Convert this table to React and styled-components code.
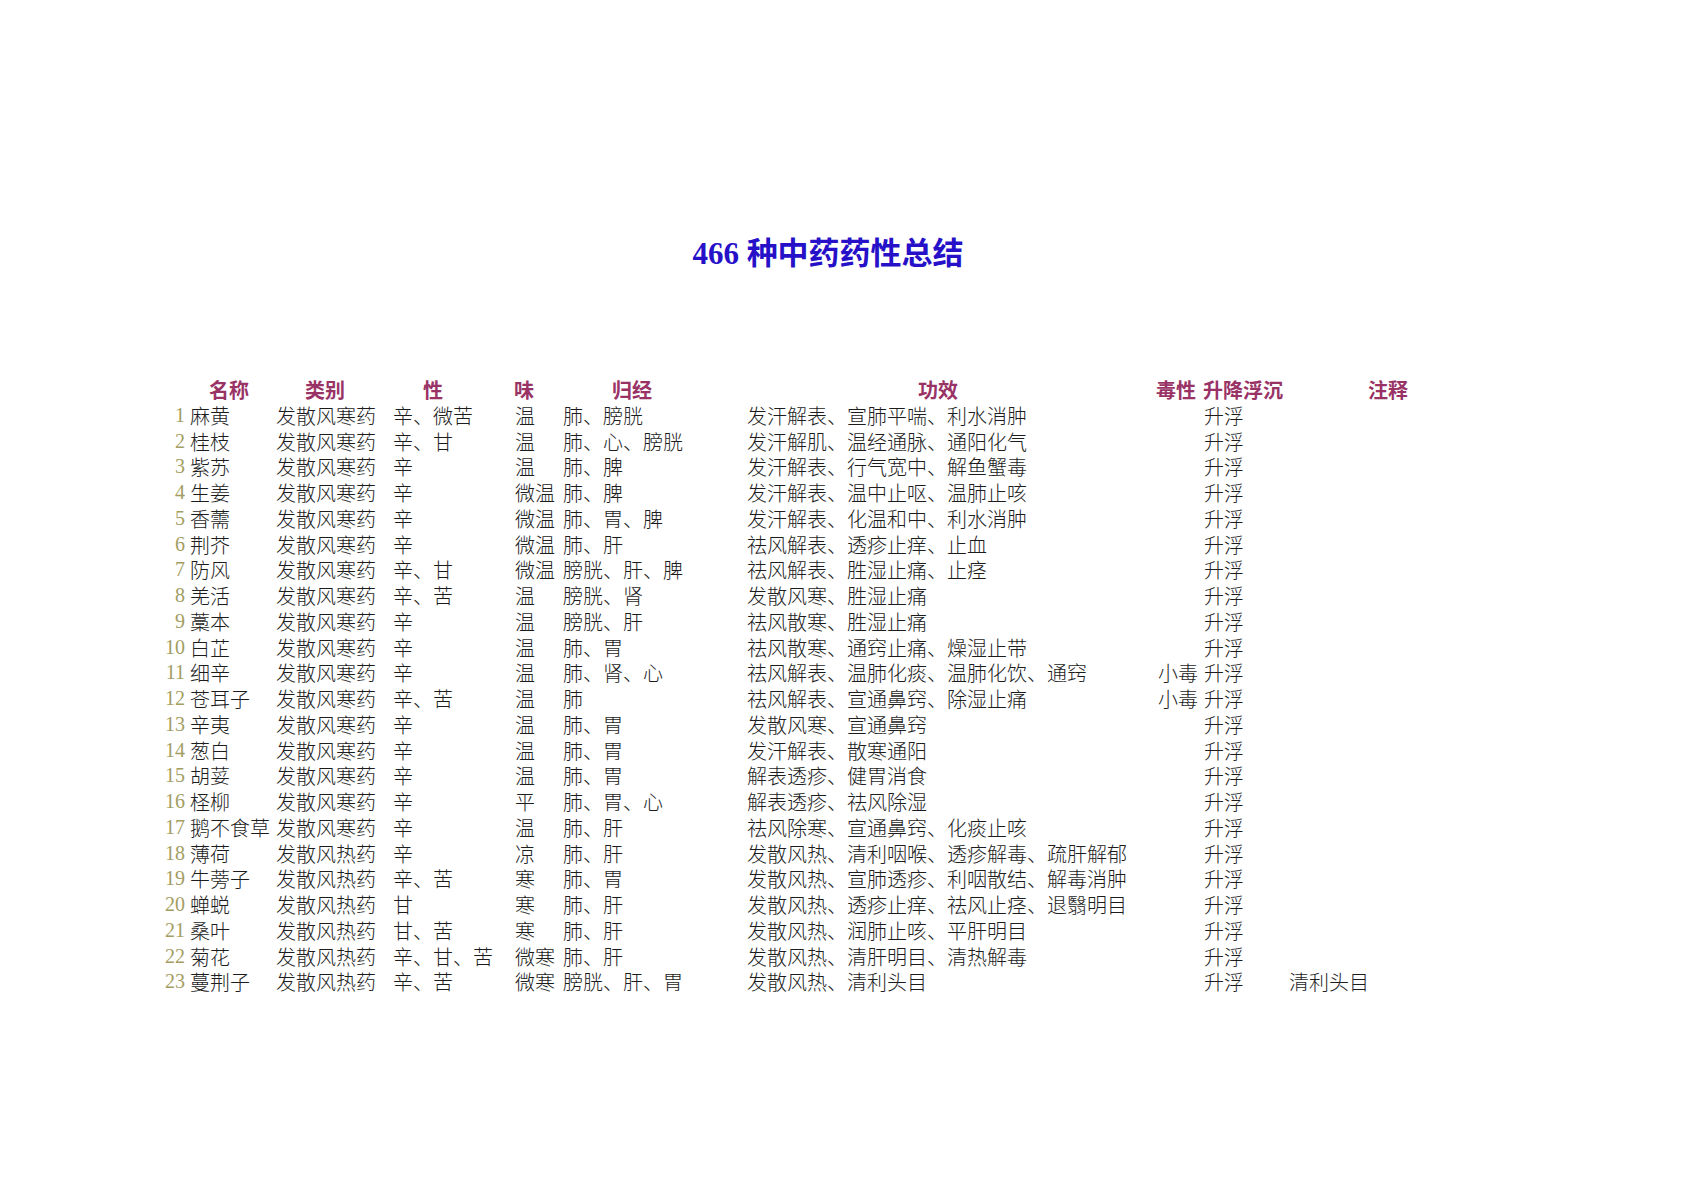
import React from "react";
import styled, { createGlobalStyle } from "styled-components";

const GlobalStyle = createGlobalStyle`
  body {
    margin: 0;
    background: #ffffff;
  }
`;

const COLS = "37px 86px 117px 122px 48px 184px 411px 46px 85px 204px";

const Sheet = styled.div`
  width: 1356px;
  margin-left: 150px;
  padding-top: 234px;
  padding-bottom: 120px;
`;

const Title = styled.h1`
  margin: 0;
  height: 40px;
  line-height: 40px;
  text-align: center;
  font-family: "Liberation Serif", "Noto Sans CJK SC", serif;
  font-size: 31px;
  font-weight: 700;
  color: #2610c8;
`;

const Table = styled.div`
  margin-top: 103px;
  display: flex;
  flex-direction: column;
`;

const Row = styled.div`
  display: grid;
  grid-template-columns: ${COLS};
  height: 25.75px;
  line-height: 25.75px;
  font-size: 20px;
  white-space: nowrap;
`;

const HeadCell = styled.div`
  text-align: center;
  padding-right: ${(p) => p.$shift || 0}px;
  font-family: "Noto Sans CJK SC", sans-serif;
  font-weight: 700;
  color: #993366;
`;

const Num = styled.div`
  text-align: right;
  padding-right: 2px;
  font-family: "Liberation Serif", serif;
  color: #a39d62;
`;

const Cell = styled.div`
  padding-left: 3px;
  font-family: "Noto Sans CJK SC", sans-serif;
  font-weight: 300;
  color: #1c1c1c;
`;

const headers = [
  { t: "", s: 0 },
  { t: "名称", s: 2 },
  { t: "类别", s: 13 },
  { t: "性", s: 36 },
  { t: "味", s: 24 },
  { t: "归经", s: 40 },
  { t: "功效", s: 23 },
  { t: "毒性", s: 4 },
  { t: "升降浮沉", s: 1 },
  { t: "注释", s: 0 },
];

const rows = [
  ["麻黄", "发散风寒药", "辛、微苦", "温", "肺、膀胱", "发汗解表、宣肺平喘、利水消肿", "", "升浮", ""],
  ["桂枝", "发散风寒药", "辛、甘", "温", "肺、心、膀胱", "发汗解肌、温经通脉、通阳化气", "", "升浮", ""],
  ["紫苏", "发散风寒药", "辛", "温", "肺、脾", "发汗解表、行气宽中、解鱼蟹毒", "", "升浮", ""],
  ["生姜", "发散风寒药", "辛", "微温", "肺、脾", "发汗解表、温中止呕、温肺止咳", "", "升浮", ""],
  ["香薷", "发散风寒药", "辛", "微温", "肺、胃、脾", "发汗解表、化温和中、利水消肿", "", "升浮", ""],
  ["荆芥", "发散风寒药", "辛", "微温", "肺、肝", "祛风解表、透疹止痒、止血", "", "升浮", ""],
  ["防风", "发散风寒药", "辛、甘", "微温", "膀胱、肝、脾", "祛风解表、胜湿止痛、止痉", "", "升浮", ""],
  ["羌活", "发散风寒药", "辛、苦", "温", "膀胱、肾", "发散风寒、胜湿止痛", "", "升浮", ""],
  ["藁本", "发散风寒药", "辛", "温", "膀胱、肝", "祛风散寒、胜湿止痛", "", "升浮", ""],
  ["白芷", "发散风寒药", "辛", "温", "肺、胃", "祛风散寒、通窍止痛、燥湿止带", "", "升浮", ""],
  ["细辛", "发散风寒药", "辛", "温", "肺、肾、心", "祛风解表、温肺化痰、温肺化饮、通窍", "小毒", "升浮", ""],
  ["苍耳子", "发散风寒药", "辛、苦", "温", "肺", "祛风解表、宣通鼻窍、除湿止痛", "小毒", "升浮", ""],
  ["辛夷", "发散风寒药", "辛", "温", "肺、胃", "发散风寒、宣通鼻窍", "", "升浮", ""],
  ["葱白", "发散风寒药", "辛", "温", "肺、胃", "发汗解表、散寒通阳", "", "升浮", ""],
  ["胡荽", "发散风寒药", "辛", "温", "肺、胃", "解表透疹、健胃消食", "", "升浮", ""],
  ["柽柳", "发散风寒药", "辛", "平", "肺、胃、心", "解表透疹、祛风除湿", "", "升浮", ""],
  ["鹅不食草", "发散风寒药", "辛", "温", "肺、肝", "祛风除寒、宣通鼻窍、化痰止咳", "", "升浮", ""],
  ["薄荷", "发散风热药", "辛", "凉", "肺、肝", "发散风热、清利咽喉、透疹解毒、疏肝解郁", "", "升浮", ""],
  ["牛蒡子", "发散风热药", "辛、苦", "寒", "肺、胃", "发散风热、宣肺透疹、利咽散结、解毒消肿", "", "升浮", ""],
  ["蝉蜕", "发散风热药", "甘", "寒", "肺、肝", "发散风热、透疹止痒、祛风止痉、退翳明目", "", "升浮", ""],
  ["桑叶", "发散风热药", "甘、苦", "寒", "肺、肝", "发散风热、润肺止咳、平肝明目", "", "升浮", ""],
  ["菊花", "发散风热药", "辛、甘、苦", "微寒", "肺、肝", "发散风热、清肝明目、清热解毒", "", "升浮", ""],
  ["蔓荆子", "发散风热药", "辛、苦", "微寒", "膀胱、肝、胃", "发散风热、清利头目", "", "升浮", "清利头目"],
];

export default function App() {
  return (
    <>
      <GlobalStyle />
      <Sheet>
        <Title>466 种中药药性总结</Title>
        <Table>
          <Row>
            {headers.map((h, i) => (
              <HeadCell key={i} $shift={h.s}>
                {h.t}
              </HeadCell>
            ))}
          </Row>
          {rows.map((r, i) => (
            <Row key={i}>
              <Num>{i + 1}</Num>
              {r.map((c, j) => (
                <Cell key={j}>{c}</Cell>
              ))}
            </Row>
          ))}
        </Table>
      </Sheet>
    </>
  );
}
